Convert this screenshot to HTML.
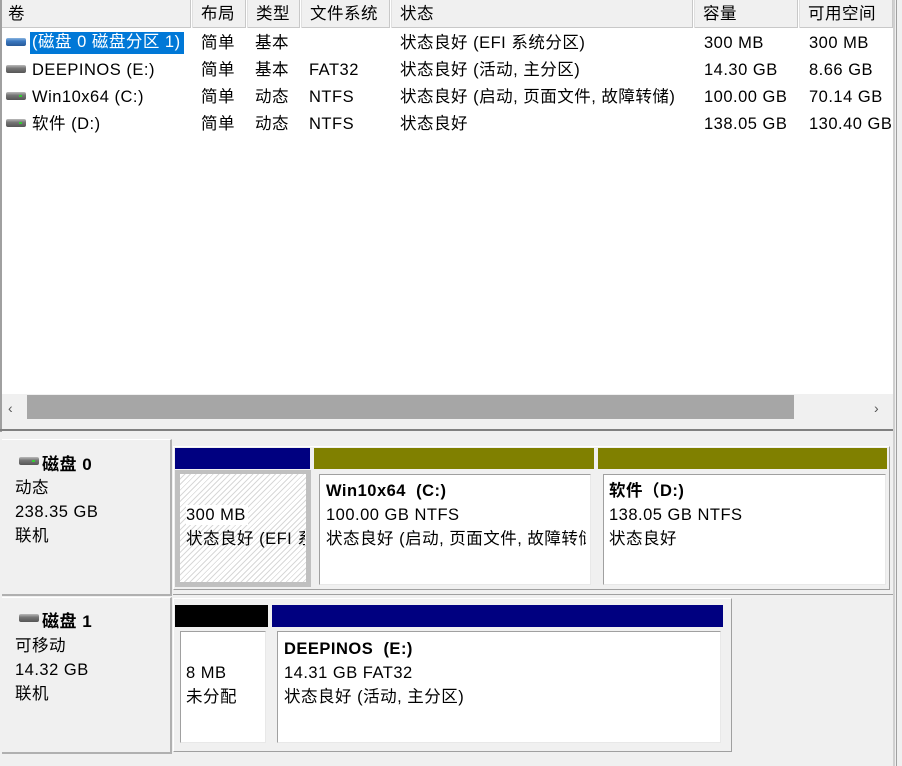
<!DOCTYPE html>
<html><head><meta charset="utf-8"><style>
*{margin:0;padding:0;box-sizing:border-box}
body{width:902px;height:766px;overflow:hidden;background:#f0f0f0;font-family:"Liberation Sans","Noto Sans CJK SC",sans-serif;font-size:16.5px;letter-spacing:0.5px;color:#000;position:relative}
.a{position:absolute;white-space:nowrap;line-height:20px;margin-top:2px}
.hd{position:absolute;top:0;height:28px;background:#f0f0f0;border-right:1px solid #c8c8c8;border-bottom:1px solid #c8c8c8;padding:4px 0 0 8px;line-height:20px}
.hd:after{content:"";position:absolute;right:-3px;top:0;width:1px;height:28px;background:#e0e0e0}
.drv{position:absolute;width:20px;height:8px;border-radius:2px;background:linear-gradient(#bbb,#777 40%,#555)}
.drv i{position:absolute;right:4px;top:3px;width:3px;height:2px;background:#3c3}
.bar{position:absolute}
.box{position:absolute;background:#fff;border:1px solid #a0a0a0;border-right-color:#e8e8e8;border-bottom-color:#e8e8e8}
.wrap{position:absolute;border:1px solid #a0a0a0;background:#f0f0f0}
</style></head><body>
<div style="position:absolute;left:0;top:0;width:893px;height:420px;background:#fff"></div>
<div style="position:absolute;left:893px;top:0;width:2px;height:766px;background:#d0d0d0"></div>
<div style="position:absolute;left:896px;top:0;width:1px;height:766px;background:#a0a0a0"></div>
<div class="hd" style="left:0;width:191px">卷</div>
<div class="hd" style="left:193px;width:53px">布局</div>
<div class="hd" style="left:248px;width:52px">类型</div>
<div class="hd" style="left:302px;width:88px">文件系统</div>
<div class="hd" style="left:392px;width:301px">状态</div>
<div class="hd" style="left:695px;width:103px">容量</div>
<div class="hd" style="left:800px;width:93px;overflow:hidden">可用空间</div>

<div class="drv" style="left:6px;top:38px;background:linear-gradient(#8ab4e0,#3a78c0 40%,#285a99)"></div>
<div class="a" style="left:30px;top:30px;background:#0078d7;color:#fff;padding:0 3px 2px 2px;outline:1px dotted #fff">(磁盘 0 磁盘分区 1)</div>
<div class="drv" style="left:6px;top:65px"></div>
<div class="drv" style="left:6px;top:92px"><i></i></div>
<div class="drv" style="left:6px;top:119px"><i></i></div>
<div class="a" style="left:32px;top:58px">DEEPINOS (E:)</div>
<div class="a" style="left:32px;top:85px">Win10x64 (C:)</div>
<div class="a" style="left:32px;top:112px">软件 (D:)</div>

<div class="a" style="left:201px;top:31px">简单</div><div class="a" style="left:255px;top:31px">基本</div>
<div class="a" style="left:201px;top:58px">简单</div><div class="a" style="left:255px;top:58px">基本</div><div class="a" style="left:309px;top:58px">FAT32</div>
<div class="a" style="left:201px;top:85px">简单</div><div class="a" style="left:255px;top:85px">动态</div><div class="a" style="left:309px;top:85px">NTFS</div>
<div class="a" style="left:201px;top:112px">简单</div><div class="a" style="left:255px;top:112px">动态</div><div class="a" style="left:309px;top:112px">NTFS</div>
<div class="a" style="left:400px;top:31px">状态良好 (EFI 系统分区)</div>
<div class="a" style="left:400px;top:58px">状态良好 (活动, 主分区)</div>
<div class="a" style="left:400px;top:85px">状态良好 (启动, 页面文件, 故障转储)</div>
<div class="a" style="left:400px;top:112px">状态良好</div>
<div class="a" style="left:704px;top:31px">300 MB</div><div class="a" style="left:809px;top:31px">300 MB</div>
<div class="a" style="left:704px;top:58px">14.30 GB</div><div class="a" style="left:809px;top:58px">8.66 GB</div>
<div class="a" style="left:704px;top:85px">100.00 GB</div><div class="a" style="left:809px;top:85px">70.14 GB</div>
<div class="a" style="left:704px;top:112px">138.05 GB</div><div class="a" style="left:809px;top:112px;width:84px;overflow:hidden">130.40 GB</div>

<div style="position:absolute;left:0;top:394px;width:893px;height:26px;background:#f0f0f0"></div>
<div style="position:absolute;left:27px;top:395px;width:767px;height:24px;background:#a6a6a6"></div>
<div class="a" style="left:8px;top:396px;font-size:14px;color:#555">‹</div>
<div class="a" style="left:874px;top:396px;font-size:14px;color:#555">›</div>
<div style="position:absolute;left:0;top:0;width:2px;height:432px;background:#a0a0a0"></div>
<div style="position:absolute;left:0;top:429px;width:893px;height:2px;background:#808080"></div>

<div style="position:absolute;left:2px;top:439px;width:170px;height:157px;border-right:2px solid #b0b0b0;border-bottom:2px solid #b0b0b0;border-top:1px solid #fff"></div>
<div class="drv" style="left:19px;top:457px"><i></i></div>
<div class="a" style="left:42px;top:453px;font-weight:bold;font-size:17px">磁盘 0</div>
<div class="a" style="left:15px;top:476px">动态</div>
<div class="a" style="left:15px;top:500px">238.35 GB</div>
<div class="a" style="left:15px;top:524px">联机</div>
<div class="wrap" style="left:173px;top:446px;width:717px;height:144px;border-color:#fff #a0a0a0 #a0a0a0 #fff"></div>
<div class="bar" style="left:175px;top:448px;width:135px;height:21px;background:#000080"></div>
<div class="bar" style="left:314px;top:448px;width:280px;height:21px;background:#808000"></div>
<div class="bar" style="left:598px;top:448px;width:289px;height:21px;background:#808000"></div>
<div style="position:absolute;left:175px;top:470px;width:136px;height:117px;background:#c0c0c0"></div>
<div style="position:absolute;left:180px;top:474px;width:126px;height:108px;background:repeating-linear-gradient(135deg,#fff 0,#fff 3px,#d8d8d8 3px,#d8d8d8 4px)"></div>
<div class="a" style="left:186px;top:503px;background:#fff;padding-right:2px">300 MB</div>
<div class="a" style="left:186px;top:527px;width:119px;overflow:hidden">状态良好 (EFI 系统</div>
<div class="box" style="left:319px;top:474px;width:272px;height:111px"></div>
<div class="a" style="left:326px;top:479px;font-weight:bold">Win10x64&nbsp; (C:)</div>
<div class="a" style="left:326px;top:503px">100.00 GB NTFS</div>
<div class="a" style="left:326px;top:527px;width:260px;overflow:hidden">状态良好 (启动, 页面文件, 故障转储)</div>
<div class="box" style="left:603px;top:474px;width:283px;height:111px"></div>
<div class="a" style="left:609px;top:479px;font-weight:bold">软件（D:)</div>
<div class="a" style="left:609px;top:503px">138.05 GB NTFS</div>
<div class="a" style="left:609px;top:527px">状态良好</div>
<div style="position:absolute;left:173px;top:594px;width:720px;height:1px;background:#a0a0a0"></div>

<div style="position:absolute;left:2px;top:597px;width:170px;height:157px;border-right:2px solid #b0b0b0;border-bottom:2px solid #b0b0b0;border-top:1px solid #fff"></div>
<div class="drv" style="left:19px;top:614px"></div>
<div class="a" style="left:42px;top:610px;font-weight:bold;font-size:17px">磁盘 1</div>
<div class="a" style="left:15px;top:634px">可移动</div>
<div class="a" style="left:15px;top:658px">14.32 GB</div>
<div class="a" style="left:15px;top:682px">联机</div>
<div class="wrap" style="left:173px;top:598px;width:559px;height:154px;border-color:#fff #a0a0a0 #a0a0a0 #fff"></div>
<div class="bar" style="left:175px;top:605px;width:93px;height:22px;background:#000"></div>
<div class="bar" style="left:272px;top:605px;width:451px;height:22px;background:#000080"></div>
<div class="box" style="left:180px;top:631px;width:86px;height:112px"></div>
<div class="a" style="left:186px;top:661px">8 MB</div>
<div class="a" style="left:186px;top:685px">未分配</div>
<div class="box" style="left:277px;top:631px;width:444px;height:112px"></div>
<div class="a" style="left:284px;top:637px;font-weight:bold">DEEPINOS&nbsp; (E:)</div>
<div class="a" style="left:284px;top:661px">14.31 GB FAT32</div>
<div class="a" style="left:284px;top:685px">状态良好 (活动, 主分区)</div>
</body></html>
